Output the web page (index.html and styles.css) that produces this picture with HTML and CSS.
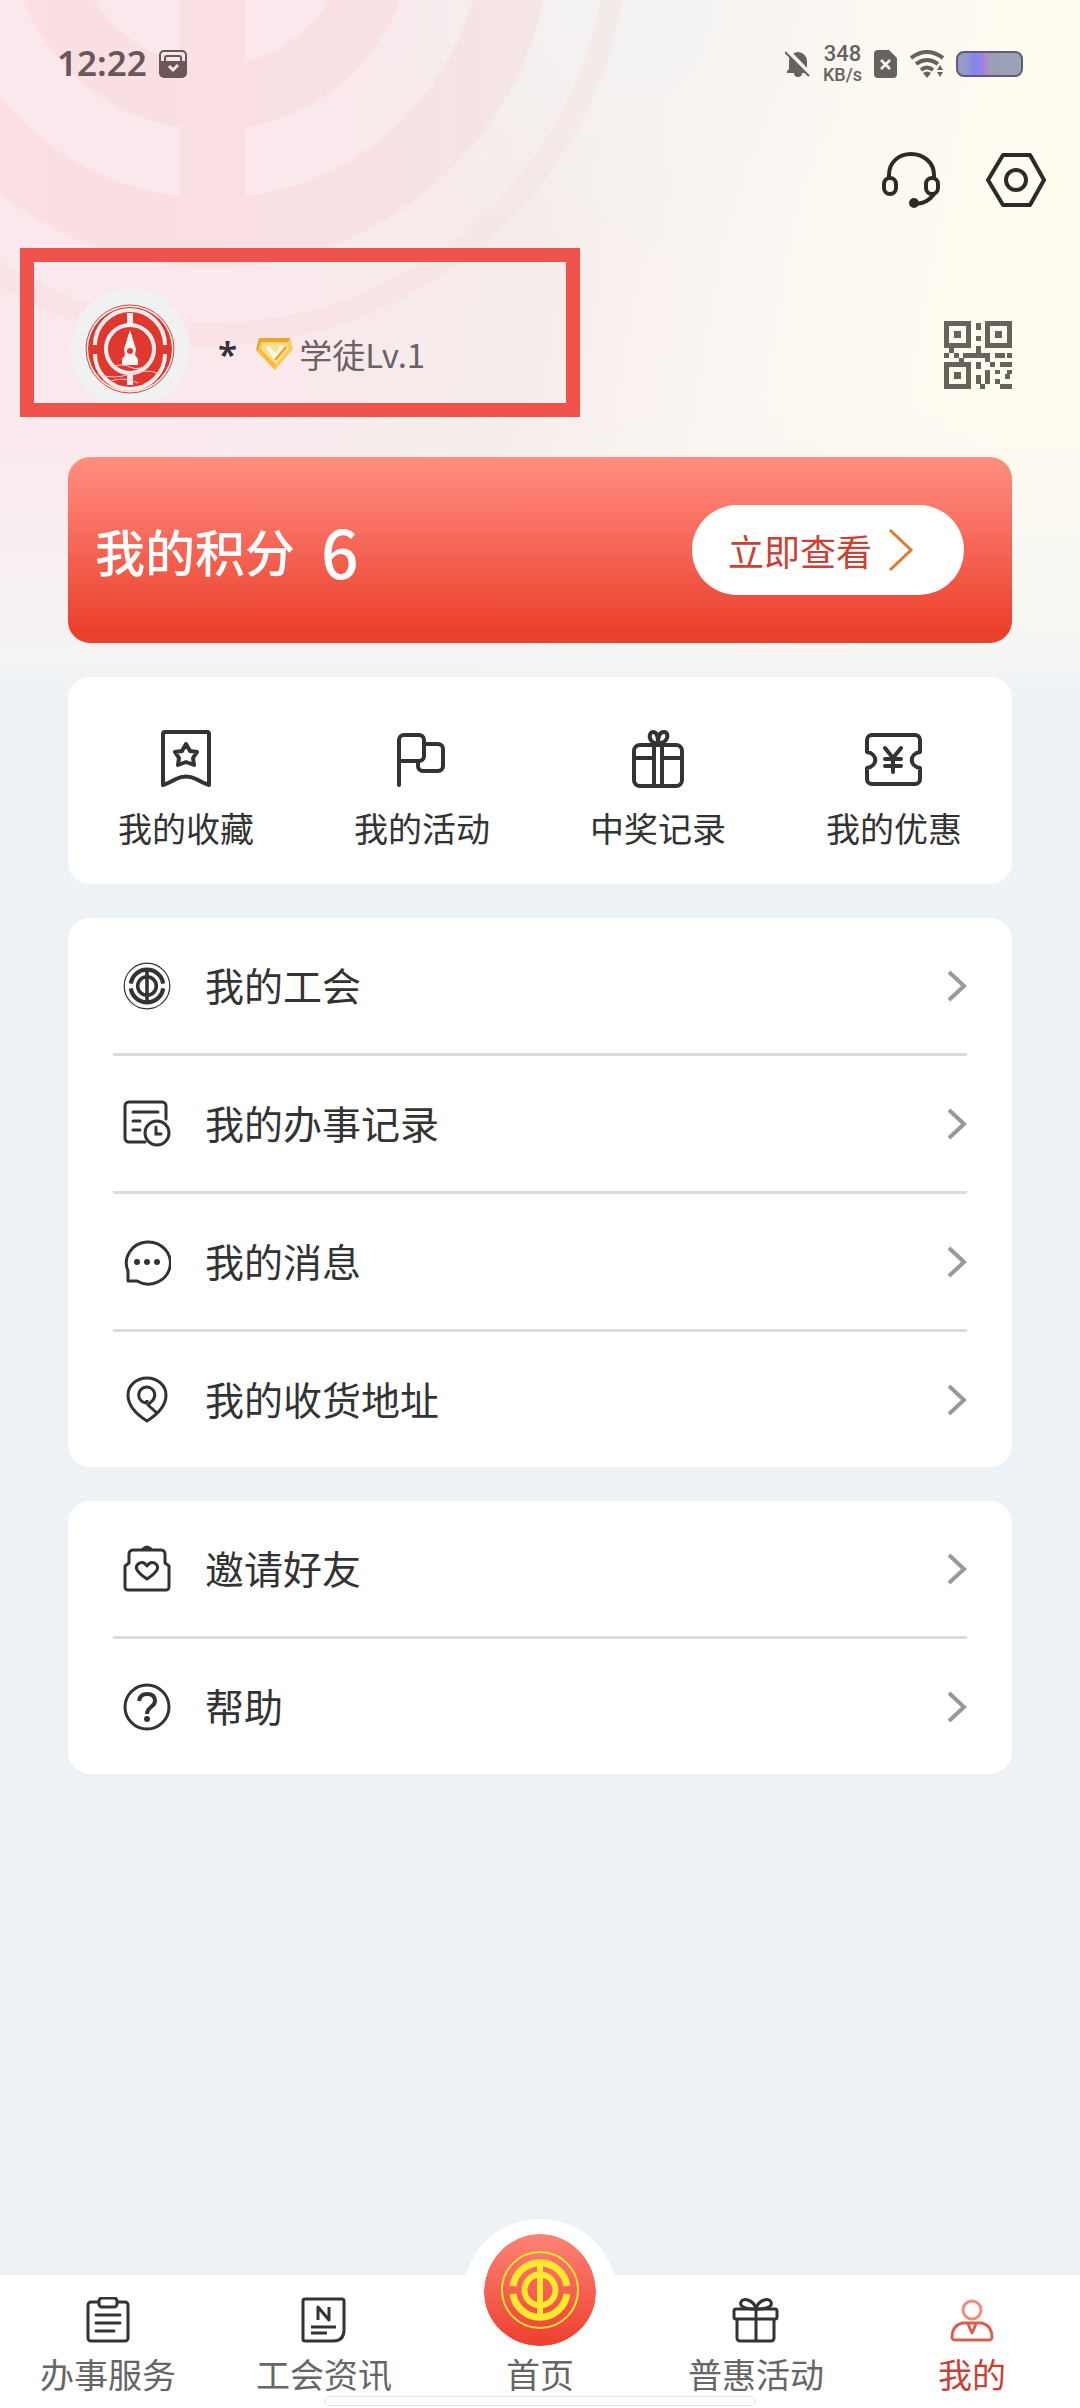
FILE: index.html
```html
<!DOCTYPE html>
<html lang="zh-CN">
  <head>
    <meta charset="utf-8" />
    <title>我的</title>
    <meta name="viewport" content="width=device-width, initial-scale=1.0" />
    <link rel="stylesheet" href="styles.css">
  </head>
  <body>
    <!-- union emblem, used in the menu and in the tab bar -->
    <svg class="defs" aria-hidden="true">
      <symbol id="emblem" viewBox="-40 -40 80 80">
        <g fill="none" stroke="currentColor">
          <circle r="38" stroke-width="2" />
          <path d="M-27 -4A27.300 27.300 0 0 1 27 -4M-27 4A27.300 27.300 0 0 0 27 4" stroke-width="7" />
          <circle r="15.500" stroke-width="6" />
          <path d="M0 -30V30" stroke-width="6" />
        </g>
      </symbol>
    </svg>

    <div class="page">
      <svg class="hero-art" viewBox="0 0 640 360" aria-hidden="true">
        <defs>
          <linearGradient id="fade" gradientUnits="userSpaceOnUse" x1="0" y1="0" x2="640" y2="0">
            <stop offset="0" stop-color="#fbdfe2" />
            <stop offset="0.5" stop-color="#f9e0e3" />
            <stop offset="1" stop-color="#f3e9e7" />
          </linearGradient>
        </defs>
        <g fill="none" stroke="url(#fade)">
          <circle cx="212" cy="-72" r="170" stroke-width="64" />
          <circle cx="212" cy="-72" r="305" stroke-width="69" />
          <circle cx="212" cy="-72" r="406" stroke-width="22" opacity="0.7" />
        </g>
        <path d="M180 0H245V240H180Z" fill="#fae0e3" />
      </svg>

      <div class="status">
        <div class="status-side">
          <span class="clock">12:22</span>
          <svg width="28" height="28" viewBox="0 0 28 28">
            <rect x="1" y="1" width="26" height="26" rx="4" fill="none" stroke="#6b565a" stroke-width="2" />
            <path d="M1 11H27V24a3 3 0 0 1-3 3H4a3 3 0 0 1-3-3Z" fill="#6b565a" />
            <path d="M6 12V8a2 2 0 0 1 2-2H20a2 2 0 0 1 2 2V12" fill="none" stroke="#6b565a" stroke-width="2" />
            <path d="M10 16L14 20L19 15" fill="none" stroke="#fbe8ec" stroke-width="3" />
          </svg>
        </div>
        <div class="status-side">
          <svg width="26" height="30" viewBox="0 0 26 30">
            <path d="M2 24V22L4 20V12a9 9 0 0 1 18 0V20L24 22V24H17a4 4 0 0 1-8 0Z" fill="#67625f" />
            <path d="M2 1L27 27" stroke="#fcf7f2" stroke-width="4" />
            <path d="M0 3L24 27" stroke="#67625f" stroke-width="2" />
          </svg>
          <span class="speed"><b>348</b><small>KB/s</small></span>
          <svg width="24" height="28" viewBox="0 0 24 28">
            <path d="M4 0H15L23 8V24a4 4 0 0 1-4 4H4a4 4 0 0 1-4-4V4a4 4 0 0 1 4-4Z" fill="#67625f" />
            <path d="M7 10L16 19M16 10L7 19" stroke="#fff" stroke-width="2.500" />
          </svg>
          <svg width="34" height="28" viewBox="0 0 34 28">
            <g fill="none" stroke="#67625f" stroke-width="4">
              <path d="M1 8Q17 -4 33 8" />
              <path d="M6 14Q17 6 28 14" />
              <path d="M11 20Q17 15 23 20" />
            </g>
            <path d="M13 23Q17 20 21 23L17 28ZM27 20L30 15L33 20ZM27 22H33L30 27Z" fill="#67625f" />
          </svg>
          <span class="battery"></span>
        </div>
      </div>

      <div class="actions">
        <button class="icon-btn" type="button" aria-label="客服">
          <svg width="60" height="60" viewBox="0 0 60 60" fill="none" stroke="#2e2a27" stroke-width="4">
            <path d="M7 28V25C7 12 17 4 29 4S52 12 52 25V28" />
            <rect x="2" y="28" width="12" height="16" rx="6" />
            <rect x="44" y="28" width="12" height="16" rx="6" />
            <path d="M52 44C47 51 41 54 33 54" />
            <circle cx="32" cy="53" r="3" fill="#2e2a27" />
          </svg>
        </button>
        <button class="icon-btn" type="button" aria-label="设置">
          <svg width="60" height="60" viewBox="0 0 60 60" fill="none" stroke="#2e2a27" stroke-width="4" stroke-linejoin="round">
            <path d="M17 5H44L58 30L44 55H17L2 30Z" />
            <circle cx="30" cy="30" r="10" />
          </svg>
        </button>
      </div>

      <div class="profile">
        <a class="user" href="#user">
          <svg class="avatar" width="124" height="124" viewBox="-62 -62 124 124">
            <circle r="60" fill="#f2f1f2" />
            <circle r="44" fill="none" stroke="#e04038" stroke-width="1" />
            <circle r="42" fill="#df382f" />
            <g fill="none" stroke="#fbeeee" stroke-width="4">
              <path d="M-35 -4A35 35 0 0 1 35 -4M-35 5A35 35 0 0 0 35 5" />
              <circle r="24" />
              <path d="M0 -36V-25M0 25V36" stroke-width="6" />
            </g>
            <path d="M0 -19L2 -13L4 -6L6 0L5 6L8 10V16H-8V10L-5 6L-6 0L-4 -6L-2 -13Z" fill="#fff5f3" />
            <circle cy="2" r="3" fill="#df382f" />
            <path d="M-18 18Q-8 14 0 18T17 16M-32 25Q-16 31 0 25T30 25M-24 34Q-8 26 8 34" fill="none" stroke="#f6c9c5" stroke-width="1" />
          </svg>
          <span class="user-text">
            <span class="name">*</span>
            <svg width="38" height="36" viewBox="0 0 38 36">
              <path d="M4 2H35L38 13L20 34L1 14Z" fill="#f9cd55" />
              <path d="M4 2H35L33 6H6L3 14H1Z" fill="#e5a72c" />
              <path d="M8 7H31L34 13L20 29L6 14Z" fill="#fbe08e" />
              <path d="M20 34L1 14L5 13L20 27Z" fill="#f6bd3d" />
              <path d="M13 11L20 21L28 10" fill="none" stroke="#fff6ee" stroke-width="4" />
              <path d="M20 24L31 11" fill="none" stroke="#e9a21d" stroke-width="2" />
            </svg>
            <span class="level">学徒Lv.1</span>
          </span>
        </a>
        <button class="icon-btn qr" type="button" aria-label="二维码">
          <svg width="68" height="68" viewBox="0 0 68 68" fill="#67635b" shape-rendering="crispEdges">
            <path fill-rule="evenodd" d="M0 0H27V27H0ZM5 5V22H22V5ZM41 0H68V27H41ZM46 5V22H63V5ZM0 41H27V68H0ZM5 46V63H22V46Z" />
            <path d="M10 10h7v7h-7ZM51 10h7v7h-7ZM10 51h7v7h-7Z" />
            <path d="M32 2h5v7h-5ZM32 15h5v5h-5ZM32 25h5v8h-5ZM19 32h27v5h-27ZM41 36h5v5h-5ZM46 41h5v5h-5ZM51 32h10v5h-10ZM63 32h5v5h-5ZM56 41h12v5h-12Z" />
            <path d="M5 26h5v6h-5ZM0 32h5v5h-5ZM10 32h5v5h-5ZM15 37h5v5h-5ZM32 41h5v7h-5ZM32 54h5v9h-5ZM41 49h5v14h-5ZM36 63h5v5h-5Z" />
            <path d="M51 49h5v4h-5ZM51 58h5v5h-5ZM63 49h5v4h-5ZM61 53h5v5h-5ZM56 63h12v5h-12Z" />
          </svg>
        </button>
      </div>

      <main>
        <section class="points">
          <h2>我的积分</h2>
          <span class="score">6</span>
          <a class="check" href="#points">
            立即查看
            <svg width="30" height="46" viewBox="0 0 30 46" fill="none" stroke="#e07a2c" stroke-width="3">
              <path d="M4 3L25 23L4 43" />
            </svg>
          </a>
        </section>

        <nav class="card quick">
          <a href="#favorites">
            <svg width="60" height="60" viewBox="0 0 60 60" fill="none" stroke="#333" stroke-width="4" stroke-linejoin="round">
              <path d="M7 5a2 2 0 0 1 2-2H51a2 2 0 0 1 2 2V56Q47 54 40 50Q30 45 20 50Q13 54 7 56Z" />
              <path d="M30 15L34 22L41 23L37 29L38 36L30 33L22 36L23 29L19 23L26 22Z" />
            </svg>
            我的收藏
          </a>
          <a href="#activities">
            <svg width="60" height="60" viewBox="0 0 60 60" fill="none" stroke="#333" stroke-width="4" stroke-linejoin="round" stroke-linecap="round">
              <path d="M7 56V11a5 5 0 0 1 5-5H27a5 5 0 0 1 5 5V27a5 5 0 0 1-5 5H7" />
              <path d="M32 15H46a5 5 0 0 1 5 5V37a5 5 0 0 1-5 5H31a5 5 0 0 1-5-5V33" />
            </svg>
            我的活动
          </a>
          <a href="#prizes">
            <svg width="60" height="60" viewBox="0 0 60 60" fill="none" stroke="#333" stroke-width="4">
              <rect x="6" y="16" width="48" height="41" rx="6" />
              <path d="M6 29H26M34 29H54M26 16V57M34 16V57" />
              <path d="M30 14C20 15 20 3 25 3S30 10 30 14C30 10 30 3 36 3S40 15 30 14" />
            </svg>
            中奖记录
          </a>
          <a href="#coupons">
            <svg width="60" height="60" viewBox="0 0 60 60" fill="none" stroke="#333" stroke-width="4" stroke-linejoin="round" stroke-linecap="round">
              <path d="M8 6H51a5 5 0 0 1 5 5V23C45 25 45 37 56 39V50a5 5 0 0 1-5 5H8a5 5 0 0 1-5-5V39C14 37 14 25 3 23V11a5 5 0 0 1 5-5Z" />
              <path d="M21 19L29 29L37 19M21 30H37M21 37H37M29 29V43" />
            </svg>
            我的优惠
          </a>
        </nav>

        <nav class="card menu">
          <a href="#union">
            <svg class="emblem-dark" width="48" height="48"><use href="#emblem" /></svg>
            <span>我的工会</span>
            <svg class="arrow" width="20" height="32" viewBox="0 0 20 32"><path d="M2 2L17 16L2 30" /></svg>
          </a>
          <a href="#records">
            <svg width="48" height="48" viewBox="0 0 48 48" fill="none" stroke="#333" stroke-width="3" stroke-linecap="round">
              <path d="M22 42H6a4 4 0 0 1-4-4V6a4 4 0 0 1 4-4H39a4 4 0 0 1 4 4V19M10 12H35M10 21H17M10 30H17" />
              <circle cx="34" cy="33" r="12" />
              <path d="M33 27V34H38" />
            </svg>
            <span>我的办事记录</span>
            <svg class="arrow" width="20" height="32" viewBox="0 0 20 32"><path d="M2 2L17 16L2 30" /></svg>
          </a>
          <a href="#messages">
            <svg width="48" height="48" viewBox="0 0 48 48" fill="none" stroke="#333" stroke-width="3" stroke-linejoin="round">
              <path d="M5 43V33A22 21 0 1 1 14 43Z" />
              <g fill="#333" stroke="none"><circle cx="14" cy="24" r="3" /><circle cx="24" cy="24" r="3" /><circle cx="34" cy="24" r="3" /></g>
            </svg>
            <span>我的消息</span>
            <svg class="arrow" width="20" height="32" viewBox="0 0 20 32"><path d="M2 2L17 16L2 30" /></svg>
          </a>
          <a href="#address">
            <svg width="48" height="48" viewBox="0 0 48 48" fill="none" stroke="#333" stroke-width="3" stroke-linejoin="round">
              <path d="M24 45Q5 33 5 19A19 17 0 0 1 43 19Q43 33 24 45Z" />
              <path d="M24 27V24M24 27A8 8 0 1 1 30 24L25 29L34 37" />
            </svg>
            <span>我的收货地址</span>
            <svg class="arrow" width="20" height="32" viewBox="0 0 20 32"><path d="M2 2L17 16L2 30" /></svg>
          </a>
        </nav>

        <nav class="card menu">
          <a href="#invite">
            <svg width="48" height="48" viewBox="0 0 48 48" fill="none" stroke="#333" stroke-width="3" stroke-linejoin="round">
              <path d="M6 18V9a4 4 0 0 1 4-4H38a4 4 0 0 1 4 4V18L46 21V42a3 3 0 0 1-3 3H5a3 3 0 0 1-3-3V21Z" />
              <path d="M20 4Q24 0 28 4Z" fill="#333" />
              <path d="M24 34C12 26 12 22 15 19Q20 15 24 21Q28 15 33 19C36 22 36 26 24 34Z" />
            </svg>
            <span>邀请好友</span>
            <svg class="arrow" width="20" height="32" viewBox="0 0 20 32"><path d="M2 2L17 16L2 30" /></svg>
          </a>
          <a href="#help">
            <svg width="48" height="48" viewBox="0 0 48 48" fill="none" stroke="#333" stroke-width="3">
              <circle cx="24" cy="24" r="22" />
              <path d="M16 18Q17 11 24 11Q32 11 32 18Q32 21 28 24Q24 27 24 31" stroke-width="4" />
              <circle cx="24" cy="36" r="3" fill="#333" stroke="none" />
            </svg>
            <span>帮助</span>
            <svg class="arrow" width="20" height="32" viewBox="0 0 20 32"><path d="M2 2L17 16L2 30" /></svg>
          </a>
        </nav>
      </main>

      <nav class="tabbar">
        <a href="#service">
          <svg width="48" height="48" viewBox="0 0 48 48" fill="none" stroke="#333" stroke-width="3" stroke-linecap="round">
            <path d="M14 5H7a3 3 0 0 0-3 3V41a3 3 0 0 0 3 3H41a3 3 0 0 0 3-3V8a3 3 0 0 0-3-3H34" />
            <rect x="15" y="1" width="18" height="9" rx="3" />
            <path d="M12 18H36M12 26H36M12 34H30" />
          </svg>
          办事服务
        </a>
        <a href="#news">
          <svg width="48" height="48" viewBox="0 0 48 48" fill="none" stroke="#333" stroke-width="3" stroke-linejoin="round">
            <path d="M5 2H42a2 2 0 0 1 2 2V33Q44 44 33 44H5a2 2 0 0 1-2-2V4a2 2 0 0 1 2-2Z" />
            <path d="M18 23V10L29 23V10M11 30H36M11 36H27" />
          </svg>
          工会资讯
        </a>
        <a class="home" href="#home">
          <span class="home-logo"><svg width="80" height="80"><use href="#emblem" /></svg></span>
          首页
        </a>
        <a href="#benefits">
          <svg width="48" height="48" viewBox="0 0 48 48" fill="none" stroke="#333" stroke-width="3" stroke-linejoin="round">
            <rect x="2" y="12" width="43" height="10" rx="2" />
            <path d="M5 22V41a3 3 0 0 0 3 3H39a3 3 0 0 0 3-3V22M24 12V44" />
            <path d="M24 12C14 12 7 10 9 5S22 3 24 12C26 3 37 0 39 5S34 12 24 12" />
          </svg>
          普惠活动
        </a>
        <a class="active" href="#me" aria-current="page">
          <svg width="48" height="48" viewBox="0 0 48 48" fill="none" stroke="#d8604f" stroke-width="3" stroke-linejoin="round">
            <circle cx="24" cy="13" r="9" stroke="#ef8d80" />
            <path d="M14 26H34Q44 29 44 40a3 3 0 0 1-3 3H7a3 3 0 0 1-3-3Q4 29 14 26ZM20 27L24 36L28 27" />
          </svg>
          我的
        </a>
        <span class="home-indicator"></span>
      </nav>
    </div>
  </body>
</html>
```
FILE: styles.css
```css
body {
  margin: 0;
  font-family: 'Noto Sans CJK SC', 'Noto Sans', sans-serif;
  color: #333;
  background-color: #edf2f6;
}

svg {
  display: block;
  flex: none;
}

a {
  color: inherit;
  text-decoration: none;
}

.defs {
  position: absolute;
  width: 0;
  height: 0;
}

.page {
  position: relative;
  display: flex;
  flex-direction: column;
  min-height: 100vh;
  background-image:
    linear-gradient(to bottom, rgba(244, 244, 244, 0) 58%, rgba(244, 244, 244, 0.9) 96%, #edf2f6 100%),
    radial-gradient(ellipse at 58% 0, #f3f3f2 0, rgba(243, 243, 242, 0) 28%),
    linear-gradient(100deg, #fbe8ed 0, #fbe8ed 22%, #f5ecea 48%, #fcf7f2 68%, #fffcf0 90%);
  background-size: 100% 690px;
  background-repeat: no-repeat;
}

.hero-art {
  position: absolute;
  top: 0;
  left: 0;
  width: 640px;
  height: 360px;
}

.status,
.actions,
.profile,
main {
  position: relative;
}

/* status bar */
.status {
  display: flex;
  justify-content: space-between;
  align-items: center;
  height: 128px;
  padding: 0 57px;
  color: #67625f;
}

.status-side {
  display: flex;
  align-items: center;
  gap: 12px;
}

.clock {
  font-family: 'Noto Sans', sans-serif;
  font-size: 35px;
  font-weight: 600;
  line-height: 40px;
  padding-bottom: 2px;
  color: #6b565a;
}

.speed {
  display: flex;
  flex-direction: column;
  align-items: center;
  font-family: Roboto, sans-serif;
  font-weight: 500;
  line-height: 21px;
}

.speed b {
  font-size: 22px;
  font-weight: 500;
}

.speed small {
  font-size: 18px;
}

.battery {
  box-sizing: border-box;
  width: 67px;
  height: 26px;
  border: 2px solid #5d5c7b;
  border-radius: 8px;
  background-image: linear-gradient(to right, #939bc6 12%, #8186ee 24%, #8d85e8 34%, #af80d8 42%, #9b9cba 50%, #9aa5b4 100%);
}

/* header */
.actions {
  display: flex;
  justify-content: flex-end;
  align-items: center;
  gap: 44px;
  height: 104px;
  padding-right: 34px;
}

.icon-btn {
  padding: 0;
  border: 0;
  background: none;
  cursor: pointer;
}

.profile {
  display: flex;
  justify-content: space-between;
  align-items: flex-end;
  margin-top: 16px;
  padding: 0 68px 0 20px;
}

.user {
  box-sizing: border-box;
  display: flex;
  align-items: center;
  width: 560px;
  height: 169px;
  padding: 32px 0 0 34px;
  border: 14px solid #f0524c;
  overflow: hidden;
}

.user-text {
  display: flex;
  align-items: center;
  padding-top: 10px;
}

.name {
  margin: 0 18px 0 26px;
  font-family: 'Noto Sans', sans-serif;
  font-size: 35px;
  font-weight: 600;
}

.level {
  margin-left: 6px;
  font-size: 33px;
  color: #6b6265;
}

.qr {
  margin-bottom: 28px;
}

/* content */
main {
  display: flex;
  flex-direction: column;
  gap: 34px;
  padding: 40px 68px;
}

.points {
  display: flex;
  align-items: center;
  height: 186px;
  padding: 0 48px 0 27px;
  border-radius: 22px;
  background-image: linear-gradient(to bottom, #ff8f80 0, #fa7567 30%, #eb422e 92%);
  color: #fff;
}

.points h2 {
  margin: 0;
  font-size: 50px;
  font-weight: 500;
}

.score {
  margin-left: 26px;
  font-size: 66px;
  font-weight: 500;
  line-height: 80px;
}

.check {
  display: flex;
  align-items: center;
  gap: 14px;
  height: 90px;
  margin-left: auto;
  padding: 0 48px 0 36px;
  border-radius: 45px;
  background-color: #fff;
  font-size: 36px;
  color: #cb4234;
}

.card {
  border-radius: 22px;
  background-color: #fff;
}

.quick {
  display: grid;
  grid-template-columns: repeat(4, 1fr);
  padding: 52px 0 36px;
}

.quick a {
  display: flex;
  flex-direction: column;
  align-items: center;
  gap: 19px;
  font-size: 34px;
  line-height: 40px;
}

.menu {
  padding: 0 45px;
}

.menu a {
  display: flex;
  align-items: center;
  gap: 34px;
  height: 135px;
  padding-left: 10px;
  font-size: 39px;
}

.menu a + a {
  border-top: 3px solid #dcdcdc;
}

.menu span {
  padding-bottom: 4px;
}

.emblem-dark {
  color: #333;
}

.arrow {
  margin-left: auto;
  fill: none;
  stroke: #999;
  stroke-width: 4px;
}

/* tab bar */
.tabbar {
  position: relative;
  isolation: isolate;
  display: grid;
  grid-template-columns: repeat(5, 1fr);
  margin-top: auto;
  padding: 22px 0 14px;
  background-color: #fff;
}

.tabbar a {
  display: flex;
  flex-direction: column;
  align-items: center;
  justify-content: flex-end;
  gap: 9px;
  font-size: 34px;
  line-height: 40px;
  color: #666;
}

.tabbar .active {
  color: #cb4234;
}

/* stays under the label, its white ring reaches down to it */
.home-logo {
  position: absolute;
  z-index: -1;
  top: -56px;
  left: 50%;
  display: flex;
  align-items: center;
  justify-content: center;
  width: 112px;
  height: 112px;
  margin-left: -76px;
  border: 20px solid #fff;
  border-top-width: 15px;
  border-radius: 50%;
  background: linear-gradient(to bottom, #fd8376, #ee3f2e) padding-box;
  color: #ffe92e;
}

.home-indicator {
  position: absolute;
  bottom: 2px;
  left: 30%;
  box-sizing: border-box;
  width: 40%;
  height: 10px;
  border: 1px solid #e2e2e2;
  border-radius: 5px;
  background-color: #fff;
}
```
